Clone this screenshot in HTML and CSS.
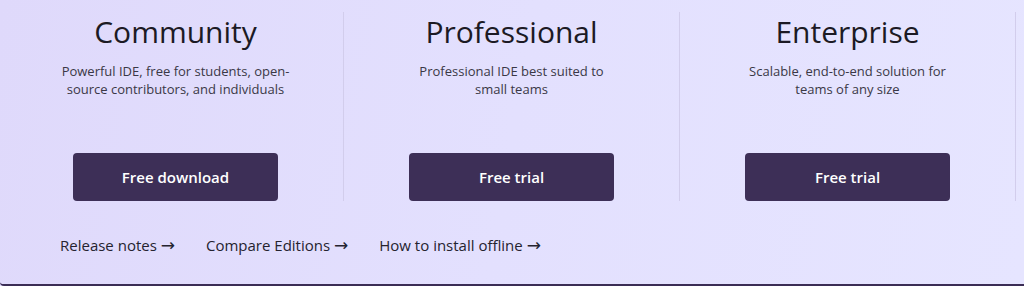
FILE: index.html
```html
<!DOCTYPE html>
<html lang="en">
<head>
<meta charset="UTF-8" />
<title>Editions</title>
<link rel="stylesheet" href="styles.css">
</head>
<body>

  <div class="panel">
    <div class="editions">
      <div class="edition">
        <h2>Community</h2>
        <p class="desc">Powerful IDE, free for students, open-source contributors, and individuals</p>
        <a class="action" href="#">Free download</a>
      </div>
      <div class="edition">
        <h2>Professional</h2>
        <p class="desc narrow">Professional IDE best suited to small teams</p>
        <a class="action" href="#">Free trial</a>
      </div>
      <div class="edition">
        <h2>Enterprise</h2>
        <p class="desc narrow">Scalable, end-to-end solution for teams of any size</p>
        <a class="action" href="#">Free trial</a>
      </div>
    </div>

    <div class="links">
      <a href="#">Release notes <span class="arrow">&rarr;</span></a>
      <a href="#">Compare Editions <span class="arrow">&rarr;</span></a>
      <a href="#">How to install offline <span class="arrow">&rarr;</span></a>
    </div>
  </div>

</body>
</html>
```

FILE: styles.css
```css
body {
  margin: 0;
  height: 286px;
  font-family: "Open Sans", "Noto Sans", sans-serif;
  color: #25232f;
  background: #e2ddfc;
}

.panel {
  box-sizing: border-box;
  height: 286px;
  padding: 12px 0 0 8px;
  background: linear-gradient(100deg, #dfd9fb 0%, #e3e0fe 50%, #e6e5ff 100%);
  border-bottom: 2px solid #3b2d55;
  border-bottom-left-radius: 4px;
}

.editions {
  display: grid;
  grid-template-columns: repeat(3, 336px);
}

.edition {
  height: 189px;
  display: flex;
  flex-direction: column;
  align-items: center;
  border-right: 1px solid #d2cdec;
}

.edition h2 {
  margin: 0;
  font-size: 30px;
  font-weight: 400;
  line-height: 40px;
  color: #1c1a24;
}

.desc {
  margin: 10px 0 0;
  width: 240px;
  font-size: 13px;
  line-height: 18px;
  text-align: center;
  color: #3a3846;
}

.desc.narrow {
  width: 215px; /* keeps the same line breaks as the design */
}

.action {
  margin-top: auto;
  width: 205px;
  height: 48px;
  display: flex;
  justify-content: center;
  align-items: center;
  background-color: #3d2f57;
  color: white;
  border-radius: 4px;
  font-size: 15px;
  font-weight: 600;
  text-decoration: none;
}

.links {
  display: flex;
  gap: 31px;
  padding: 34px 0 0 52px;
}

.links a {
  font-size: 15px;
  line-height: 20px;
  color: #25232f;
  text-decoration: none;
}

.arrow {
  font-family: "DejaVu Sans", sans-serif;
  font-size: 17px;
  line-height: 1;
}
```
